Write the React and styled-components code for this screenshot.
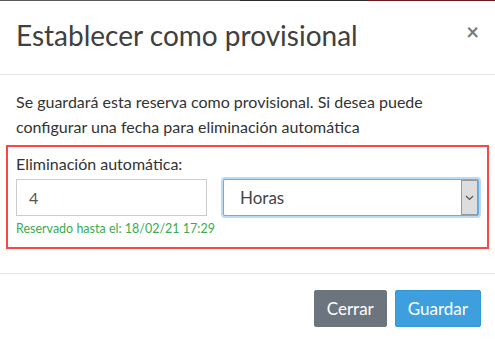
import React from 'react'
import styled, { createGlobalStyle } from 'styled-components'

const Global = createGlobalStyle`
  body {
    margin: 0;
    background: #fff;
    font-family: Lato, "Noto Sans", sans-serif;
    color: #333;
  }
  * { box-sizing: border-box; }
`

const Backdrop = styled.div`
  display: flex;
  height: 1px;
`

const Strip = styled.div`
  flex: ${props => props.grow};
  background: ${props => props.color};
`

const Modal = styled.div`
  width: 495px;
  background: #fff;
`

const Header = styled.div`
  display: flex;
  align-items: center;
  justify-content: space-between;
  height: 74px;
  padding: 0 16px 6px 16px;
  border-bottom: 1px solid #e5e5e5;
`

const Title = styled.h4`
  margin: 0;
  font-size: 28px;
  font-weight: 400;
  color: #404040;
`

const Close = styled.button`
  border: none;
  background: none;
  padding: 0;
  margin-top: -6px;
  font-family: inherit;
  font-size: 22px;
  font-weight: 700;
  color: #7a7a7a;
  cursor: pointer;
`

const Body = styled.div`
  padding: 14px 16px 24px 16px;
`

const Intro = styled.p`
  margin: 0 0 6px 0;
  max-width: 420px;
  font-size: 16px;
  line-height: 25px;
  color: #333;
`

const Highlight = styled.div`
  margin: 0 -10px;
  padding: 6px 8px 10px 8px;
  border: 2px solid #ff4444;
`

const Label = styled.label`
  display: block;
  font-size: 16px;
  line-height: 22px;
  color: #333;
`

const Row = styled.div`
  display: flex;
  gap: 16px;
  margin-top: 4px;
`

const NumberInput = styled.input`
  width: 191px;
  height: 37px;
  padding: 0 12px;
  border: 1px solid #ccc;
  font-family: inherit;
  font-size: 16px;
  color: #555;
  outline: none;
`

const SelectBox = styled.div`
  flex: 1;
  display: flex;
  height: 37px;
  border: 1px solid #66afe9;
  box-shadow: 0 0 0 2px #b9dbf7;
  border-radius: 2px;
  background: #fff;
`

const SelectValue = styled.div`
  flex: 1;
  padding-left: 16px;
  display: flex;
  align-items: center;
  font-size: 17px;
  color: #444;
`

const Arrow = styled.div`
  width: 17px;
  display: flex;
  align-items: center;
  justify-content: center;
  background: #ddd;
  border: 1px solid #999;
`

const Hint = styled.div`
  margin-top: 5px;
  font-size: 12.5px;
  line-height: 16px;
  color: #3aac4f;
`

const Footer = styled.div`
  display: flex;
  justify-content: flex-end;
  gap: 8px;
  padding: 16px 14px 16px 16px;
  border-top: 1px solid #e5e5e5;
`

const Button = styled.button`
  height: 37px;
  padding: 0 12px;
  border: 1px solid ${props => props.primary ? '#3497d6' : '#6c757d'};
  border-radius: 2px;
  background: ${props => props.primary ? '#3d9fdd' : '#6c757d'};
  color: #fff;
  font-family: inherit;
  font-size: 17px;
  cursor: pointer;
`

export default function App() {
  return (
    <>
      <Global />
      <Backdrop>
        <Strip grow={240} color="#5a5a5a" />
        <Strip grow={128} color="#2b2b30" />
        <Strip grow={127} color="#6b1a22" />
      </Backdrop>
      <Modal>
        <Header>
          <Title>Establecer como provisional</Title>
          <Close>×</Close>
        </Header>
        <Body>
          <Intro>
            Se guardará esta reserva como provisional. Si desea puede configurar una fecha para eliminación automática
          </Intro>
          <Highlight>
            <Label>Eliminación automática:</Label>
            <Row>
              <NumberInput type="text" defaultValue="4" />
              <SelectBox>
                <SelectValue>Horas</SelectValue>
                <Arrow>
                  <svg width="9" height="6" viewBox="0 0 9 6">
                    <path d="M1 1l3.5 3.5L8 1" fill="none" stroke="#555" strokeWidth="1.2" />
                  </svg>
                </Arrow>
              </SelectBox>
            </Row>
            <Hint>Reservado hasta el: 18/02/21 17:29</Hint>
          </Highlight>
        </Body>
        <Footer>
          <Button>Cerrar</Button>
          <Button primary>Guardar</Button>
        </Footer>
      </Modal>
    </>
  )
}
